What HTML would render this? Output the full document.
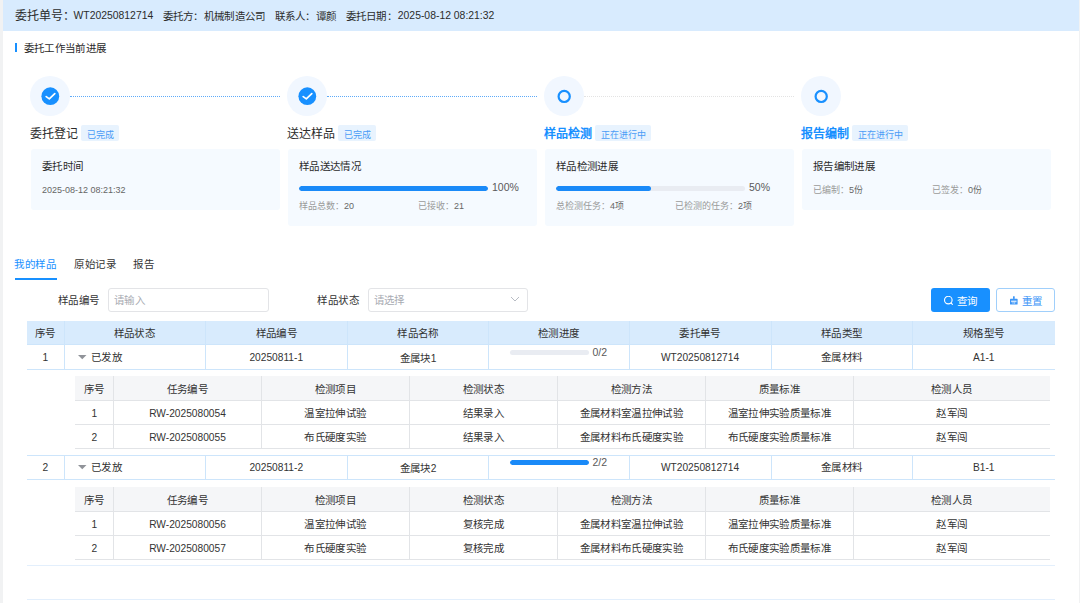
<!DOCTYPE html><html lang="zh-CN"><head><meta charset="utf-8"><style>
*{box-sizing:border-box;margin:0;padding:0}
html,body{width:1080px;height:603px;overflow:hidden;background:#f1f2f3;font-family:"Liberation Sans",sans-serif;color:#333}
div,span{position:absolute;white-space:nowrap}
i{font-style:normal}
.t{line-height:1}
.circ{width:40px;height:40px;border-radius:50%;background:#f1f7ff;top:76px}
.line{height:0;top:96px}
.card{top:149px;width:249px;background:#f5faff;border-radius:3px}
.stitle{top:126.5px;font-size:12px;line-height:14px;color:#2b2b2b}
.tag{top:124.5px;height:16.3px;line-height:20px;font-size:9px;color:#4a9cf6;background:#e8f3fe;padding:0 5px 0 6px;border-radius:2px}
.ctitle{font-size:10.5px;line-height:12px;color:#2b2b2b}
.csub{font-size:9px;line-height:10px;color:#9a9a9a}
.csub b{font-weight:normal;color:#666}
.track{height:5px;border-radius:3px;background:#e9ecf2;overflow:hidden}
.fill{left:0;top:0;height:5px;border-radius:3px;background:#1a8af8}
.cell{text-align:center;font-size:10.2px;color:#333}
.cell i{font-size:10.5px;position:relative;top:-1px}
.nc i{top:-1.5px}
.hc i{top:0}
</style></head><body>
<div style="left:3px;top:0;width:1076px;height:603px;background:#fff"></div>
<div style="left:3px;top:0;width:1076px;height:31px;background:#d8ebfe"></div>
<div class="t" style="left:14.5px;top:10px;font-size:12px;color:#2b2b2b">委托单号：</div>
<div class="t" style="left:73.5px;top:10.9px;font-size:10.4px;color:#2b2b2b">WT20250812714</div>
<div class="t" style="left:162.5px;top:10.5px;font-size:10.5px;color:#2b2b2b"><i style="letter-spacing:0.33px">委托方：机械制造公司</i></div>
<div class="t" style="left:274.5px;top:10.5px;font-size:10.5px;color:#2b2b2b"><i style="letter-spacing:0.33px">联系人：谭颜</i></div>
<div class="t" style="left:345.5px;top:10.5px;font-size:10.5px;color:#2b2b2b"><i style="letter-spacing:0.33px">委托日期：</i></div>
<div class="t" style="left:397.8px;top:10.9px;font-size:10.4px;color:#2b2b2b">2025-08-12 08:21:32</div>
<div style="left:15px;top:43px;width:2px;height:9px;background:#1890ff"></div>
<div class="t" style="left:23.5px;top:42.5px;font-size:10.5px;color:#2b2b2b"><i style="letter-spacing:0.4px">委托工作当前进展</i></div>
<div class="circ" style="left:30px"><svg width="40" height="40" style="position:absolute;left:0;top:0"><circle cx="20.3" cy="20.2" r="8.9" fill="#1890ff"/><path d="M16.2 20.6 L19.3 22.9 L24.8 17.6" fill="none" stroke="#fff" stroke-width="1.7" stroke-linecap="round" stroke-linejoin="round"/></svg></div>
<div class="circ" style="left:287px"><svg width="40" height="40" style="position:absolute;left:0;top:0"><circle cx="20.3" cy="20.2" r="8.9" fill="#1890ff"/><path d="M16.2 20.6 L19.3 22.9 L24.8 17.6" fill="none" stroke="#fff" stroke-width="1.7" stroke-linecap="round" stroke-linejoin="round"/></svg></div>
<div class="circ" style="left:544px"><svg width="40" height="40" style="position:absolute;left:0;top:0"><circle cx="20.2" cy="20.4" r="5.6" fill="none" stroke="#1890ff" stroke-width="2.2"/></svg></div>
<div class="circ" style="left:801px"><svg width="40" height="40" style="position:absolute;left:0;top:0"><circle cx="20.2" cy="20.4" r="5.6" fill="none" stroke="#1890ff" stroke-width="2.2"/></svg></div>
<div class="line" style="left:70px;width:210px;border-top:1px dotted #5eaaf8"></div>
<div class="line" style="left:327px;width:210px;border-top:1px dotted #5eaaf8"></div>
<div class="line" style="left:584px;width:210px;border-top:1px dotted #e3e3e3"></div>
<div class="stitle" style="left:30px;">委托登记</div>
<div class="tag" style="left:80.5px">已完成</div>
<div class="stitle" style="left:287px;">送达样品</div>
<div class="tag" style="left:337.5px">已完成</div>
<div class="stitle" style="left:544px;color:#1890ff;font-weight:bold;">样品检测</div>
<div class="tag" style="left:594.5px">正在进行中</div>
<div class="stitle" style="left:801px;color:#1890ff;font-weight:bold;">报告编制</div>
<div class="tag" style="left:851.5px">正在进行中</div>
<div class="card" style="left:31px;height:61px"></div>
<div class="card" style="left:288px;height:77px"></div>
<div class="card" style="left:545px;height:77px"></div>
<div class="card" style="left:802px;height:61px"></div>
<div class="ctitle" style="left:42px;top:160px"><i style="letter-spacing:0.35px">委托时间</i></div>
<div class="csub" style="left:42px;top:185px;color:#666">2025-08-12 08:21:32</div>
<div class="ctitle" style="left:299px;top:160px"><i style="letter-spacing:0.35px">样品送达情况</i></div>
<div class="track" style="left:299px;top:186px;width:189px"><div class="fill" style="width:189px"></div></div>
<div class="t" style="left:492px;top:182.4px;font-size:10.5px;color:#595959">100%</div>
<div class="csub" style="left:299px;top:201.3px">样品总数：<b>20</b></div>
<div class="csub" style="left:418px;top:201.3px">已接收：<b>21</b></div>
<div class="ctitle" style="left:556px;top:160px"><i style="letter-spacing:0.35px">样品检测进展</i></div>
<div class="track" style="left:556px;top:186px;width:189px"><div class="fill" style="width:95px"></div></div>
<div class="t" style="left:749px;top:182.4px;font-size:10.5px;color:#595959">50%</div>
<div class="csub" style="left:556px;top:201.3px">总检测任务：<b>4项</b></div>
<div class="csub" style="left:675px;top:201.3px">已检测的任务：<b>2项</b></div>
<div class="ctitle" style="left:813px;top:160px"><i style="letter-spacing:0.35px">报告编制进展</i></div>
<div class="csub" style="left:813px;top:185px">已编制：<b>5份</b></div>
<div class="csub" style="left:932px;top:185px">已签发：<b>0份</b></div>
<div class="t" style="left:14px;top:258.8px;font-size:10.5px;color:#1890ff"><i style="letter-spacing:0.5px">我的样品</i></div>
<div class="t" style="left:74px;top:258.8px;font-size:10.5px;color:#333"><i style="letter-spacing:0.5px">原始记录</i></div>
<div class="t" style="left:133px;top:258.8px;font-size:10.5px;color:#333"><i style="letter-spacing:0.5px">报告</i></div>
<div style="left:15px;top:277.5px;width:41.5px;height:2px;background:#1890ff"></div>
<div class="t" style="left:57.5px;top:295px;font-size:10.5px;color:#333"><i style="letter-spacing:0.5px">样品编号</i></div>
<div style="left:108px;top:288px;width:160.5px;height:23.5px;border:1px solid #e3e4e7;border-radius:3px"></div>
<div class="t" style="left:114px;top:295px;font-size:10.5px;color:#a8abb2"><i style="letter-spacing:0.35px">请输入</i></div>
<div class="t" style="left:317px;top:295px;font-size:10.5px;color:#333"><i style="letter-spacing:0.5px">样品状态</i></div>
<div style="left:367.5px;top:288px;width:160px;height:23.5px;border:1px solid #e3e4e7;border-radius:3px"></div>
<div class="t" style="left:373.5px;top:295px;font-size:10.5px;color:#a8abb2"><i style="letter-spacing:0.35px">请选择</i></div>
<svg width="10" height="6" style="position:absolute;left:510px;top:296px"><path d="M1 1 L5 5 L9 1" fill="none" stroke="#b8bcc4" stroke-width="1"/></svg>
<div style="left:931px;top:288px;width:59px;height:24px;background:#1890ff;border-radius:3px"></div>
<svg width="12" height="12" style="position:absolute;left:943px;top:296px"><circle cx="5.3" cy="4.1" r="3.8" fill="none" stroke="#fff" stroke-width="1.1"/><path d="M8.1 7 L9.4 8.3" stroke="#fff" stroke-width="1.1" stroke-linecap="round"/></svg>
<div class="t" style="left:956.5px;top:295.5px;font-size:10.5px;color:#fff"><i style="letter-spacing:0.35px">查询</i></div>
<div style="left:996px;top:288px;width:59px;height:24px;background:#fff;border:1px solid #a0cffb;border-radius:3px"></div>
<svg width="10" height="10" style="position:absolute;left:1009px;top:295px"><rect x="4" y="1.3" width="1.7" height="2.6" fill="#3d96f7"/><rect x="1" y="3.8" width="7.6" height="5.8" rx="0.6" fill="#3d96f7"/><rect x="2.1" y="5.6" width="5.4" height="1.6" fill="#cfe5fd"/><rect x="3.6" y="7.2" width="0.8" height="1.6" fill="#cfe5fd"/><rect x="5.3" y="7.2" width="0.8" height="1.6" fill="#cfe5fd"/></svg>
<div class="t" style="left:1022px;top:295.5px;font-size:10.5px;color:#4096f7"><i style="letter-spacing:0.35px">重置</i></div>
<div style="left:26.5px;top:321px;width:1028.5px;height:24px;background:#d8ebfd;border-bottom:1px solid #cde5fb"></div>
<div class="cell hc" style="left:26.5px;top:321.8px;width:37.5px;height:23px;line-height:23px;color:#333"><i style="letter-spacing:0.35px">序号</i></div>
<div style="left:63.5px;top:321px;width:1px;height:23px;background:#cde5fb"></div>
<div class="cell hc" style="left:64px;top:321.8px;width:141px;height:23px;line-height:23px;color:#333"><i style="letter-spacing:0.35px">样品状态</i></div>
<div style="left:204.5px;top:321px;width:1px;height:23px;background:#cde5fb"></div>
<div class="cell hc" style="left:205px;top:321.8px;width:142.5px;height:23px;line-height:23px;color:#333"><i style="letter-spacing:0.35px">样品编号</i></div>
<div style="left:347.0px;top:321px;width:1px;height:23px;background:#cde5fb"></div>
<div class="cell hc" style="left:347.5px;top:321.8px;width:141.0px;height:23px;line-height:23px;color:#333"><i style="letter-spacing:0.35px">样品名称</i></div>
<div style="left:488.0px;top:321px;width:1px;height:23px;background:#cde5fb"></div>
<div class="cell hc" style="left:488.5px;top:321.8px;width:140.5px;height:23px;line-height:23px;color:#333"><i style="letter-spacing:0.35px">检测进度</i></div>
<div style="left:628.5px;top:321px;width:1px;height:23px;background:#cde5fb"></div>
<div class="cell hc" style="left:629px;top:321.8px;width:142px;height:23px;line-height:23px;color:#333"><i style="letter-spacing:0.35px">委托单号</i></div>
<div style="left:770.5px;top:321px;width:1px;height:23px;background:#cde5fb"></div>
<div class="cell hc" style="left:771px;top:321.8px;width:141.5px;height:23px;line-height:23px;color:#333"><i style="letter-spacing:0.35px">样品类型</i></div>
<div style="left:912.0px;top:321px;width:1px;height:23px;background:#cde5fb"></div>
<div class="cell hc" style="left:912.5px;top:321.8px;width:142.5px;height:23px;line-height:23px;color:#333"><i style="letter-spacing:0.35px">规格型号</i></div>
<div style="left:26.5px;top:345px;width:1028.5px;height:25px;border-bottom:1px solid #cde5fb"></div>
<div style="left:63.5px;top:345px;width:1px;height:24px;background:#cde5fb"></div>
<div class="cell" style="left:26.5px;top:346px;width:37.5px;height:24px;line-height:24px">1</div>
<div style="left:204.5px;top:345px;width:1px;height:24px;background:#cde5fb"></div>
<svg width="9" height="5" style="position:absolute;left:78px;top:355.3px"><path d="M0 0 H8.5 L4.25 4.2 Z" fill="#909399"/></svg>
<div class="t" style="left:91px;top:351.5px;font-size:10.5px;color:#333"><i style="letter-spacing:0.35px">已发放</i></div>
<div style="left:347.0px;top:345px;width:1px;height:24px;background:#cde5fb"></div>
<div class="cell" style="left:205px;top:346px;width:142.5px;height:24px;line-height:24px">20250811-1</div>
<div style="left:488.0px;top:345px;width:1px;height:24px;background:#cde5fb"></div>
<div class="cell hc" style="left:347.5px;top:346px;width:141.0px;height:24px;line-height:24px"><i style="letter-spacing:0.35px">金属块</i>1</div>
<div style="left:628.5px;top:345px;width:1px;height:24px;background:#cde5fb"></div>
<div class="track" style="left:510px;top:349.8px;width:79px"><div class="fill" style="width:0px"></div></div>
<div class="t" style="left:592.5px;top:347px;font-size:10.5px;color:#595959">0/2</div>
<div style="left:770.5px;top:345px;width:1px;height:24px;background:#cde5fb"></div>
<div class="cell" style="left:629px;top:346px;width:142px;height:24px;line-height:24px">WT20250812714</div>
<div style="left:912.0px;top:345px;width:1px;height:24px;background:#cde5fb"></div>
<div class="cell" style="left:771px;top:346px;width:141.5px;height:24px;line-height:24px"><i style="letter-spacing:0.35px">金属材料</i></div>
<div class="cell" style="left:912.5px;top:346px;width:142.5px;height:24px;line-height:24px">A1-1</div>
<div style="left:75px;top:376px;width:975px;height:25px;background:#f5f6f8;border-bottom:1px solid #e2e4e7"></div>
<div class="cell hc" style="left:75px;top:377px;width:38.5px;height:24px;line-height:24px"><i style="letter-spacing:0.35px">序号</i></div>
<div style="left:113.0px;top:376px;width:1px;height:73px;background:#e2e4e7"></div>
<div class="cell hc" style="left:113.5px;top:377px;width:148.0px;height:24px;line-height:24px"><i style="letter-spacing:0.35px">任务编号</i></div>
<div style="left:261.0px;top:376px;width:1px;height:73px;background:#e2e4e7"></div>
<div class="cell hc" style="left:261.5px;top:377px;width:147.5px;height:24px;line-height:24px"><i style="letter-spacing:0.35px">检测项目</i></div>
<div style="left:408.5px;top:376px;width:1px;height:73px;background:#e2e4e7"></div>
<div class="cell hc" style="left:409px;top:377px;width:148.5px;height:24px;line-height:24px"><i style="letter-spacing:0.35px">检测状态</i></div>
<div style="left:557.0px;top:376px;width:1px;height:73px;background:#e2e4e7"></div>
<div class="cell hc" style="left:557.5px;top:377px;width:147.5px;height:24px;line-height:24px"><i style="letter-spacing:0.35px">检测方法</i></div>
<div style="left:704.5px;top:376px;width:1px;height:73px;background:#e2e4e7"></div>
<div class="cell hc" style="left:705px;top:377px;width:148.5px;height:24px;line-height:24px"><i style="letter-spacing:0.35px">质量标准</i></div>
<div style="left:853.0px;top:376px;width:1px;height:73px;background:#e2e4e7"></div>
<div class="cell hc" style="left:853.5px;top:377px;width:196.5px;height:24px;line-height:24px"><i style="letter-spacing:0.35px">检测人员</i></div>
<div style="left:75px;top:401px;width:975px;height:24px;border-bottom:1px solid #e2e4e7"></div>
<div class="cell nc" style="left:75px;top:402px;width:38.5px;height:24px;line-height:24px">1</div>
<div class="cell nc" style="left:113.5px;top:402px;width:148.0px;height:24px;line-height:24px">RW-2025080054</div>
<div class="cell nc" style="left:261.5px;top:402px;width:147.5px;height:24px;line-height:24px"><i style="letter-spacing:0.35px">温室拉伸试验</i></div>
<div class="cell nc" style="left:409px;top:402px;width:148.5px;height:24px;line-height:24px"><i style="letter-spacing:0.35px">结果录入</i></div>
<div class="cell nc" style="left:557.5px;top:402px;width:147.5px;height:24px;line-height:24px"><i style="letter-spacing:0.35px">金属材料室温拉伸试验</i></div>
<div class="cell nc" style="left:705px;top:402px;width:148.5px;height:24px;line-height:24px"><i style="letter-spacing:0.35px">温室拉伸实验质量标准</i></div>
<div class="cell nc" style="left:853.5px;top:402px;width:196.5px;height:24px;line-height:24px"><i style="letter-spacing:0.35px">赵军闯</i></div>
<div style="left:75px;top:425px;width:975px;height:24px;border-bottom:1px solid #e2e4e7"></div>
<div class="cell nc" style="left:75px;top:426px;width:38.5px;height:24px;line-height:24px">2</div>
<div class="cell nc" style="left:113.5px;top:426px;width:148.0px;height:24px;line-height:24px">RW-2025080055</div>
<div class="cell nc" style="left:261.5px;top:426px;width:147.5px;height:24px;line-height:24px"><i style="letter-spacing:0.35px">布氏硬度实验</i></div>
<div class="cell nc" style="left:409px;top:426px;width:148.5px;height:24px;line-height:24px"><i style="letter-spacing:0.35px">结果录入</i></div>
<div class="cell nc" style="left:557.5px;top:426px;width:147.5px;height:24px;line-height:24px"><i style="letter-spacing:0.35px">金属材料布氏硬度实验</i></div>
<div class="cell nc" style="left:705px;top:426px;width:148.5px;height:24px;line-height:24px"><i style="letter-spacing:0.35px">布氏硬度实验质量标准</i></div>
<div class="cell nc" style="left:853.5px;top:426px;width:196.5px;height:24px;line-height:24px"><i style="letter-spacing:0.35px">赵军闯</i></div>
<div style="left:26.5px;top:455px;width:1028.5px;height:1px;background:#cde5fb"></div>
<div style="left:26.5px;top:455px;width:1028.5px;height:25px;border-bottom:1px solid #cde5fb"></div>
<div style="left:63.5px;top:455px;width:1px;height:24px;background:#cde5fb"></div>
<div class="cell" style="left:26.5px;top:456px;width:37.5px;height:24px;line-height:24px">2</div>
<div style="left:204.5px;top:455px;width:1px;height:24px;background:#cde5fb"></div>
<svg width="9" height="5" style="position:absolute;left:78px;top:465.3px"><path d="M0 0 H8.5 L4.25 4.2 Z" fill="#909399"/></svg>
<div class="t" style="left:91px;top:461.5px;font-size:10.5px;color:#333"><i style="letter-spacing:0.35px">已发放</i></div>
<div style="left:347.0px;top:455px;width:1px;height:24px;background:#cde5fb"></div>
<div class="cell" style="left:205px;top:456px;width:142.5px;height:24px;line-height:24px">20250811-2</div>
<div style="left:488.0px;top:455px;width:1px;height:24px;background:#cde5fb"></div>
<div class="cell hc" style="left:347.5px;top:456px;width:141.0px;height:24px;line-height:24px"><i style="letter-spacing:0.35px">金属块</i>2</div>
<div style="left:628.5px;top:455px;width:1px;height:24px;background:#cde5fb"></div>
<div class="track" style="left:510px;top:459.8px;width:79px"><div class="fill" style="width:79px"></div></div>
<div class="t" style="left:592.5px;top:457px;font-size:10.5px;color:#595959">2/2</div>
<div style="left:770.5px;top:455px;width:1px;height:24px;background:#cde5fb"></div>
<div class="cell" style="left:629px;top:456px;width:142px;height:24px;line-height:24px">WT20250812714</div>
<div style="left:912.0px;top:455px;width:1px;height:24px;background:#cde5fb"></div>
<div class="cell" style="left:771px;top:456px;width:141.5px;height:24px;line-height:24px"><i style="letter-spacing:0.35px">金属材料</i></div>
<div class="cell" style="left:912.5px;top:456px;width:142.5px;height:24px;line-height:24px">B1-1</div>
<div style="left:75px;top:487px;width:975px;height:25px;background:#f5f6f8;border-bottom:1px solid #e2e4e7"></div>
<div class="cell hc" style="left:75px;top:488px;width:38.5px;height:24px;line-height:24px"><i style="letter-spacing:0.35px">序号</i></div>
<div style="left:113.0px;top:487px;width:1px;height:73px;background:#e2e4e7"></div>
<div class="cell hc" style="left:113.5px;top:488px;width:148.0px;height:24px;line-height:24px"><i style="letter-spacing:0.35px">任务编号</i></div>
<div style="left:261.0px;top:487px;width:1px;height:73px;background:#e2e4e7"></div>
<div class="cell hc" style="left:261.5px;top:488px;width:147.5px;height:24px;line-height:24px"><i style="letter-spacing:0.35px">检测项目</i></div>
<div style="left:408.5px;top:487px;width:1px;height:73px;background:#e2e4e7"></div>
<div class="cell hc" style="left:409px;top:488px;width:148.5px;height:24px;line-height:24px"><i style="letter-spacing:0.35px">检测状态</i></div>
<div style="left:557.0px;top:487px;width:1px;height:73px;background:#e2e4e7"></div>
<div class="cell hc" style="left:557.5px;top:488px;width:147.5px;height:24px;line-height:24px"><i style="letter-spacing:0.35px">检测方法</i></div>
<div style="left:704.5px;top:487px;width:1px;height:73px;background:#e2e4e7"></div>
<div class="cell hc" style="left:705px;top:488px;width:148.5px;height:24px;line-height:24px"><i style="letter-spacing:0.35px">质量标准</i></div>
<div style="left:853.0px;top:487px;width:1px;height:73px;background:#e2e4e7"></div>
<div class="cell hc" style="left:853.5px;top:488px;width:196.5px;height:24px;line-height:24px"><i style="letter-spacing:0.35px">检测人员</i></div>
<div style="left:75px;top:512px;width:975px;height:24px;border-bottom:1px solid #e2e4e7"></div>
<div class="cell nc" style="left:75px;top:513px;width:38.5px;height:24px;line-height:24px">1</div>
<div class="cell nc" style="left:113.5px;top:513px;width:148.0px;height:24px;line-height:24px">RW-2025080056</div>
<div class="cell nc" style="left:261.5px;top:513px;width:147.5px;height:24px;line-height:24px"><i style="letter-spacing:0.35px">温室拉伸试验</i></div>
<div class="cell nc" style="left:409px;top:513px;width:148.5px;height:24px;line-height:24px"><i style="letter-spacing:0.35px">复核完成</i></div>
<div class="cell nc" style="left:557.5px;top:513px;width:147.5px;height:24px;line-height:24px"><i style="letter-spacing:0.35px">金属材料室温拉伸试验</i></div>
<div class="cell nc" style="left:705px;top:513px;width:148.5px;height:24px;line-height:24px"><i style="letter-spacing:0.35px">温室拉伸实验质量标准</i></div>
<div class="cell nc" style="left:853.5px;top:513px;width:196.5px;height:24px;line-height:24px"><i style="letter-spacing:0.35px">赵军闯</i></div>
<div style="left:75px;top:536px;width:975px;height:24px;border-bottom:1px solid #e2e4e7"></div>
<div class="cell nc" style="left:75px;top:537px;width:38.5px;height:24px;line-height:24px">2</div>
<div class="cell nc" style="left:113.5px;top:537px;width:148.0px;height:24px;line-height:24px">RW-2025080057</div>
<div class="cell nc" style="left:261.5px;top:537px;width:147.5px;height:24px;line-height:24px"><i style="letter-spacing:0.35px">布氏硬度实验</i></div>
<div class="cell nc" style="left:409px;top:537px;width:148.5px;height:24px;line-height:24px"><i style="letter-spacing:0.35px">复核完成</i></div>
<div class="cell nc" style="left:557.5px;top:537px;width:147.5px;height:24px;line-height:24px"><i style="letter-spacing:0.35px">金属材料布氏硬度实验</i></div>
<div class="cell nc" style="left:705px;top:537px;width:148.5px;height:24px;line-height:24px"><i style="letter-spacing:0.35px">布氏硬度实验质量标准</i></div>
<div class="cell nc" style="left:853.5px;top:537px;width:196.5px;height:24px;line-height:24px"><i style="letter-spacing:0.35px">赵军闯</i></div>
<div style="left:26.5px;top:565px;width:1028.5px;height:1px;background:#e3effc"></div>
<div style="left:26.5px;top:599px;width:1028.5px;height:1px;background:#e3effc"></div>
</body></html>
